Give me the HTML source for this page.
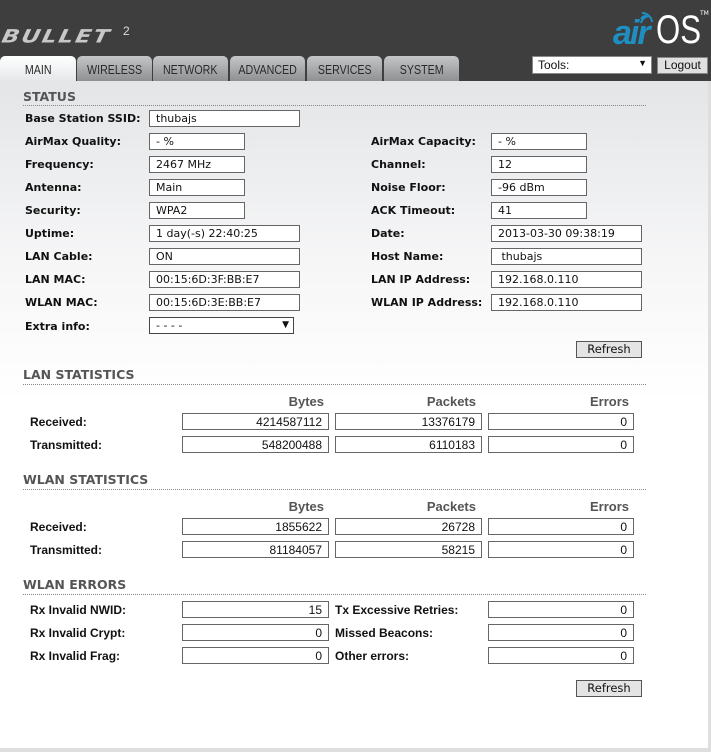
<!DOCTYPE html>
<html><head><meta charset="utf-8"><style>
*{margin:0;padding:0;box-sizing:border-box}
body{width:711px;height:752px;background:#dedede;position:relative;overflow:hidden;font-family:"DejaVu Sans",Verdana,sans-serif;font-size:11px;color:#111}
#hdr{position:absolute;left:0;top:0;width:711px;height:81px;background:#3e3e3e}
.a{position:absolute}
.tab{position:absolute;top:56px;height:25px;width:75px;border-radius:5px 5px 0 0;background:linear-gradient(#c4c6c8,#8e9092);color:#2a2a2a;font-family:"Liberation Sans",sans-serif;font-size:13px;text-align:center;line-height:27px}
.tab span{display:inline-block;transform:scaleX(0.82)}
#content{position:absolute;left:0;top:81px;width:708px;height:667px;background:linear-gradient(#e3e5e7 0px,#f6f6f7 180px,#fff 320px)}
.h{position:absolute;left:23px;font-weight:bold;font-size:12.5px;color:#555;font-family:"DejaVu Sans",sans-serif}
.line{position:absolute;left:23px;width:623px;border-top:1px dotted #888}
.l{position:absolute;font-weight:bold;font-size:11px;color:#111}
.in{position:absolute;height:17px;border:1px solid #666;background:#fff;font-size:11px;padding-left:6px;line-height:15px;color:#111}
.n{position:absolute;height:17px;width:147px;border:1px solid #666;background:#fff;font-family:"Liberation Sans",sans-serif;font-size:12px;text-align:right;padding-right:6px;line-height:16px}
.ch{position:absolute;font-family:"Liberation Sans",sans-serif;font-weight:bold;font-size:13px;color:#555;text-align:right;width:140px}
.btn{position:absolute;width:66px;height:17px;border:1px solid #555;background:#e4e4e4;font-size:11.5px;text-align:center;line-height:15px;color:#111}
.s{font-family:'Liberation Sans',sans-serif;font-size:12px}
</style></head><body>
<div id="hdr">
 <div class="a" style="left:2px;top:24px;font-family:'DejaVu Sans',sans-serif;font-weight:bold;font-style:italic;font-size:23px;color:#c8c8c8;letter-spacing:2px;transform:skewX(-12deg) scaleY(0.8)">BULLET</div>
 <div class="a" style="left:123px;top:24px;color:#ddd;font-size:12px;font-family:'Liberation Sans',sans-serif">2</div>
 <div class="a" style="left:613px;top:14px;font-family:'Liberation Sans',sans-serif;font-size:34px;font-weight:bold;font-style:italic;color:#1f8fc2;letter-spacing:-2px">air</div>
 <div class="a" style="left:656px;top:8px;font-family:'Liberation Sans',sans-serif;font-size:40px;color:#fff;transform:scaleX(0.78);transform-origin:left">OS</div>
 <div class="a" style="left:700px;top:10px;font-size:6px;color:#fff">TM</div>
 <svg class="a" style="left:638px;top:10px" width="16" height="16"><path d="M3 13 A9 9 0 0 1 11 6 M3 9 A5 5 0 0 1 8 6 M4 3 A10 10 0 0 1 14 12" stroke="#1f8fc2" stroke-width="2" fill="none"/></svg>
 <div class="tab" style="left:0;width:76px;background:linear-gradient(#fff,#e4e6e8);height:26px"><span>MAIN</span></div>
 <div class="tab" style="left:77px"><span>WIRELESS</span></div>
 <div class="tab" style="left:153px"><span>NETWORK</span></div>
 <div class="tab" style="left:230px"><span>ADVANCED</span></div>
 <div class="tab" style="left:307px"><span>SERVICES</span></div>
 <div class="tab" style="left:384px"><span>SYSTEM</span></div>
 <div class="a" style="left:532px;top:56px;width:120px;height:18px;background:#fff;border:1px solid #888;padding:1px 5px;font-family:'Liberation Sans',sans-serif;font-size:12px">Tools:<span style="position:absolute;right:4px;top:1px;font-size:9px">▼</span></div>
 <div class="a" style="left:657px;top:57px;width:51px;height:17px;background:#e0e0e0;border:1px solid #888;font-family:'Liberation Sans',sans-serif;font-size:12px;text-align:center;line-height:15px">Logout</div>
</div>
<div id="content"></div>

<div class="h" style="top:89px">STATUS</div><div class="line" style="top:105px"></div>
<div class="l" style="left:25px;top:112px">Base Station SSID:</div><div class="in" style="left:149px;top:110px;width:151px">thubajs</div>
<div class="l" style="left:25px;top:135px">AirMax Quality:</div><div class="in" style="left:149px;top:133px;width:96px">- %</div>
<div class="l" style="left:25px;top:158px">Frequency:</div><div class="in" style="left:149px;top:156px;width:96px">2467 MHz</div>
<div class="l" style="left:25px;top:181px">Antenna:</div><div class="in" style="left:149px;top:179px;width:96px">Main</div>
<div class="l" style="left:25px;top:204px">Security:</div><div class="in" style="left:149px;top:202px;width:96px">WPA2</div>
<div class="l" style="left:25px;top:227px">Uptime:</div><div class="in" style="left:149px;top:225px;width:151px">1 day(-s) 22:40:25</div>
<div class="l" style="left:25px;top:250px">LAN Cable:</div><div class="in" style="left:149px;top:248px;width:151px">ON</div>
<div class="l" style="left:25px;top:273px">LAN MAC:</div><div class="in" style="left:149px;top:271px;width:151px">00:15:6D:3F:BB:E7</div>
<div class="l" style="left:25px;top:296px">WLAN MAC:</div><div class="in" style="left:149px;top:294px;width:151px">00:15:6D:3E:BB:E7</div>
<div class="l" style="left:25px;top:320px">Extra info:</div><div class="in" style="left:149px;top:317px;width:145px;border-color:#444">- - - -<span style="position:absolute;right:4px;top:0;font-size:9px">▼</span></div>

<div class="l" style="left:371px;top:135px">AirMax Capacity:</div><div class="in" style="left:491px;top:133px;width:96px">- %</div>
<div class="l" style="left:371px;top:158px">Channel:</div><div class="in" style="left:491px;top:156px;width:96px">12</div>
<div class="l" style="left:371px;top:181px">Noise Floor:</div><div class="in" style="left:491px;top:179px;width:96px">-96 dBm</div>
<div class="l" style="left:371px;top:204px">ACK Timeout:</div><div class="in" style="left:491px;top:202px;width:96px">41</div>
<div class="l" style="left:371px;top:227px">Date:</div><div class="in" style="left:491px;top:225px;width:151px">2013-03-30 09:38:19</div>
<div class="l" style="left:371px;top:250px">Host Name:</div><div class="in" style="left:491px;top:248px;width:151px">&nbsp;thubajs</div>
<div class="l" style="left:371px;top:273px">LAN IP Address:</div><div class="in" style="left:491px;top:271px;width:151px">192.168.0.110</div>
<div class="l" style="left:371px;top:296px">WLAN IP Address:</div><div class="in" style="left:491px;top:294px;width:151px">192.168.0.110</div>
<div class="btn" style="left:576px;top:341px">Refresh</div>

<div class="h" style="top:367px">LAN STATISTICS</div><div class="line" style="top:384px"></div>
<div class="ch" style="left:184px;top:394px">Bytes</div><div class="ch" style="left:336px;top:394px">Packets</div><div class="ch" style="left:489px;top:394px">Errors</div>
<div class="l s" style="left:30px;top:415px">Received:</div>
<div class="n" style="left:182px;top:413px">4214587112</div><div class="n" style="left:335px;top:413px">13376179</div><div class="n" style="left:488px;top:413px;width:146px">0</div>
<div class="l s" style="left:30px;top:438px">Transmitted:</div>
<div class="n" style="left:182px;top:436px">548200488</div><div class="n" style="left:335px;top:436px">6110183</div><div class="n" style="left:488px;top:436px;width:146px">0</div>

<div class="h" style="top:472px">WLAN STATISTICS</div><div class="line" style="top:489px"></div>
<div class="ch" style="left:184px;top:499px">Bytes</div><div class="ch" style="left:336px;top:499px">Packets</div><div class="ch" style="left:489px;top:499px">Errors</div>
<div class="l s" style="left:30px;top:520px">Received:</div>
<div class="n" style="left:182px;top:518px">1855622</div><div class="n" style="left:335px;top:518px">26728</div><div class="n" style="left:488px;top:518px;width:146px">0</div>
<div class="l s" style="left:30px;top:543px">Transmitted:</div>
<div class="n" style="left:182px;top:541px">81184057</div><div class="n" style="left:335px;top:541px">58215</div><div class="n" style="left:488px;top:541px;width:146px">0</div>

<div class="h" style="top:577px">WLAN ERRORS</div><div class="line" style="top:594px"></div>
<div class="l s" style="left:30px;top:603px">Rx Invalid NWID:</div><div class="n" style="left:182px;top:601px">15</div>
<div class="l s" style="left:335px;top:603px">Tx Excessive Retries:</div><div class="n" style="left:488px;top:601px;width:146px">0</div>
<div class="l s" style="left:30px;top:626px">Rx Invalid Crypt:</div><div class="n" style="left:182px;top:624px">0</div>
<div class="l s" style="left:335px;top:626px">Missed Beacons:</div><div class="n" style="left:488px;top:624px;width:146px">0</div>
<div class="l s" style="left:30px;top:649px">Rx Invalid Frag:</div><div class="n" style="left:182px;top:647px">0</div>
<div class="l s" style="left:335px;top:649px">Other errors:</div><div class="n" style="left:488px;top:647px;width:146px">0</div>
<div class="btn" style="left:576px;top:680px">Refresh</div>
</body></html>
